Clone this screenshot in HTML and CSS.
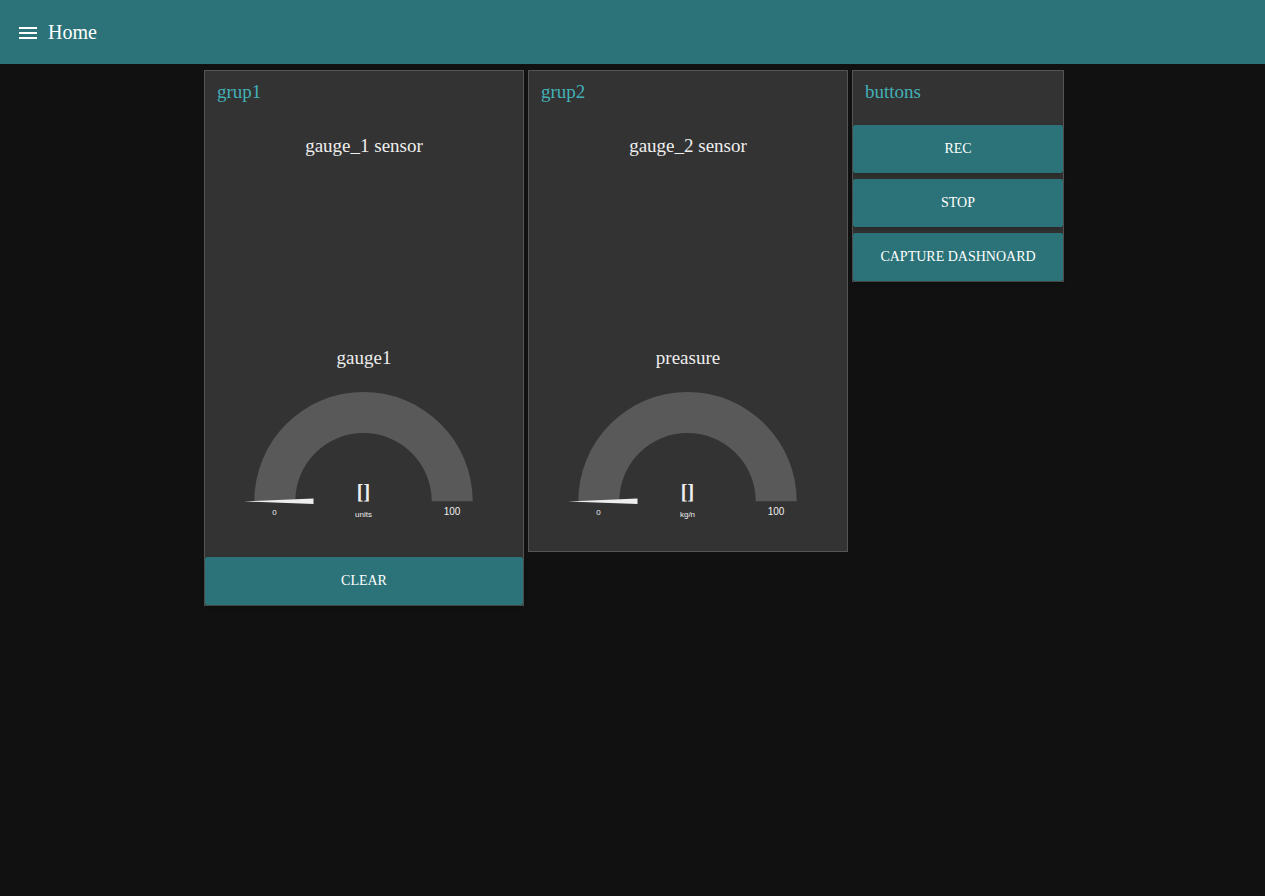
FILE: index.html
```html
<!DOCTYPE html>
<html lang="en">
<head>
<meta charset="utf-8">
<title>Home</title>
<link rel="stylesheet" href="styles.css">
</head>
<body>
<header class="toolbar">
  <button class="menu-button" type="button" aria-label="Open menu">
    <svg class="menu-icon" viewBox="0 0 24 24" aria-hidden="true"><path d="M3 6h18v2H3zM3 11h18v2H3zM3 16h18v2H3z"/></svg>
  </button>
  <h1 class="toolbar-title">Home</h1>
</header>
<main class="dashboard">
  <section class="group">
    <h2 class="group-title">grup1</h2>
    <div class="widgets">
      <div class="widget chart">
        <h3 class="widget-title">gauge_1 sensor</h3>
      </div>
      <div class="widget gauge">
        <h3 class="widget-title">gauge1</h3>
        <svg class="dial" viewBox="0 0 318 160" role="img" aria-label="gauge1">
          <path class="track" d="M49.3 126.2A109.2 109.2 0 0 1 267.7 126.2H226.7A68.2 68.2 0 0 0 90.3 126.2Z"/>
          <path class="needle" d="M39 126.5L108.500 123.5V129Z"/>
          <text class="value" x="158.500" y="124">[]</text>
          <text class="small" x="158.500" y="142">units</text>
          <text class="small" x="69.500" y="140">0</text>
          <text class="limit" x="247" y="140">100</text>
        </svg>
      </div>
      <button class="action" type="button">CLEAR</button>
    </div>
  </section>
  <section class="group">
    <h2 class="group-title">grup2</h2>
    <div class="widgets">
      <div class="widget chart">
        <h3 class="widget-title">gauge_2 sensor</h3>
      </div>
      <div class="widget gauge">
        <h3 class="widget-title">preasure</h3>
        <svg class="dial" viewBox="0 0 318 160" role="img" aria-label="preasure">
          <path class="track" d="M49.3 126.2A109.2 109.2 0 0 1 267.7 126.2H226.7A68.2 68.2 0 0 0 90.3 126.2Z"/>
          <path class="needle" d="M39 126.5L108.500 123.5V129Z"/>
          <text class="value" x="158.500" y="124">[]</text>
          <text class="small" x="158.500" y="142">kg/n</text>
          <text class="small" x="69.500" y="140">0</text>
          <text class="limit" x="247" y="140">100</text>
        </svg>
      </div>
    </div>
  </section>
  <section class="group narrow">
    <h2 class="group-title">buttons</h2>
    <div class="widgets">
      <button class="action" type="button">REC</button>
      <button class="action" type="button">STOP</button>
      <button class="action" type="button">CAPTURE DASHNOARD</button>
    </div>
  </section>
</main>
</body>
</html>
```
FILE: styles.css
```css
* {
  box-sizing: border-box;
}

body {
  margin: 0;
  min-height: 100vh;
  background: #111;
  color: #eee;
  font-family: "Liberation Serif", serif;
}

h1, h2, h3 {
  margin: 0;
  font-weight: 400;
}

button {
  border: 0;
  font-family: inherit;
  cursor: pointer;
}

.toolbar {
  display: flex;
  align-items: center;
  gap: 8px;
  height: 64px;
  padding: 0 16px;
  background: #2b7378;
  color: #fff;
}

.menu-button {
  display: flex;
  padding: 2px 0 0;
  background: none;
}

.menu-icon {
  width: 24px;
  height: 24px;
  fill: #fff;
}

.toolbar-title {
  font-size: 20px;
}

.dashboard {
  display: flex;
  flex-wrap: wrap;
  justify-content: center;
  align-items: flex-start;
  gap: 4px;
  padding: 6px 0 6px 3px;
}

.group {
  width: 320px;
  border: 1px solid #555;
  background: #333;
}

.narrow {
  width: 212px;
}

.group-title {
  padding: 0 12px;
  color: #42b0b8;
  font-size: 19px;
  line-height: 42px;
}

.widgets {
  display: flex;
  flex-direction: column;
  gap: 6px;
  padding-top: 12px;
}

.widget {
  height: 210px;
}

.widget-title {
  font-size: 19px;
  line-height: 34px;
  text-align: center;
}

.chart {
  padding-top: 4px;
}

.dial {
  display: block;
  width: 100%;
}

.track {
  fill: #595959;
}

.needle {
  fill: #eee;
}

.dial text {
  fill: #eee;
  text-anchor: middle;
  font-family: "Liberation Sans", sans-serif;
}

.dial .value {
  font-family: "Liberation Serif", serif;
  font-size: 20px;
  font-weight: 700;
}

.dial .small {
  font-size: 8px;
}

.dial .limit {
  font-size: 10px;
}

.action {
  height: 48px;
  border-radius: 2px;
  background: #2b7378;
  color: #fff;
  font-size: 14px;
  box-shadow: 0 2px 5px rgba(0, 0, 0, 0.26);
}
```
